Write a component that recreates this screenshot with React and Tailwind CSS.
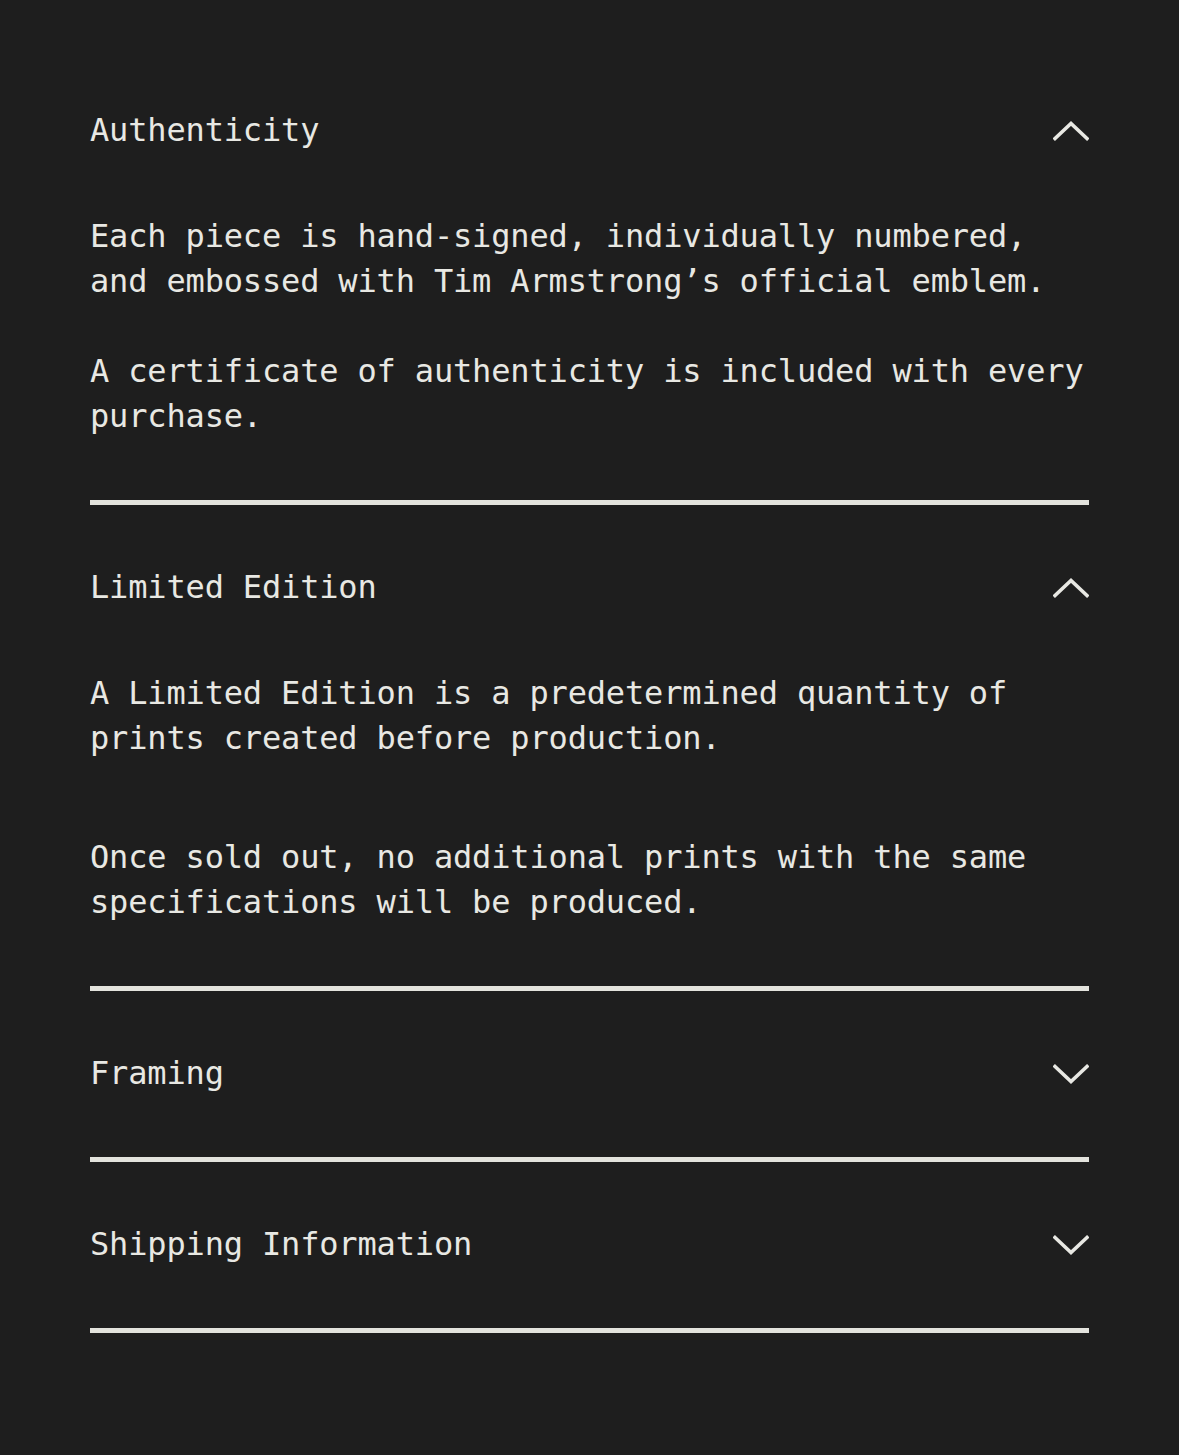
import React, { useState } from 'react'

const SECTIONS = [
  {
    id: 'auth',
    title: 'Authenticity',
    open: true,
    gap: 'mt-[45px]',
    paras: [
      'Each piece is hand-signed, individually numbered, and embossed with Tim Armstrong\u2019s official emblem.',
      'A certificate of authenticity is included with every purchase.',
    ],
  },
  {
    id: 'limited',
    title: 'Limited Edition',
    open: true,
    gap: 'mt-[74px]',
    paras: [
      'A Limited Edition is a predetermined quantity of prints created before production.',
      'Once sold out, no additional prints with the same specifications will be produced.',
    ],
  },
  { id: 'framing', title: 'Framing', open: false, paras: [] },
  { id: 'shipping', title: 'Shipping Information', open: false, paras: [] },
]

function Chevron({up}){
  return (
    <svg width="36" height="20" viewBox="0 0 36 20" fill="none" className="shrink-0">
      <path d={up ? 'M2 17.5 L18 2.5 L34 17.5' : 'M2 2.5 L18 17.5 L34 2.5'} stroke="#e8e8e3" strokeWidth="3.6" strokeLinecap="square" />
    </svg>
  )
}

export default function App(){
  const [open, setOpen] = useState(()=> Object.fromEntries(SECTIONS.map(s=>[s.id, s.open])))

  return (
    <main className="min-h-screen bg-[#1e1e1e] px-[90px] pt-[48px] pb-[120px] text-[#e8e8e3] text-[32px] leading-[45px] tracking-[-0.16px]" style={{fontFamily: '"DejaVu Sans Mono", "Liberation Mono", monospace'}}>
      {SECTIONS.map(s=> (
        <section key={s.id} className="border-b-[5px] border-[#e3e3dd]">
          <button
            onClick={()=> setOpen(o=>({...o, [s.id]: !o[s.id]}))}
            className="w-full flex items-center justify-between pt-[60px] pb-[61px] text-left"
          >
            <span>{s.title}</span>
            <Chevron up={open[s.id]} />
          </button>
          {open[s.id] && s.paras.length > 0 && (
            <div className="pb-[61px] pr-[2px]">
              {s.paras.map((p,i)=> <p key={i} className={i ? s.gap : ''}>{p}</p>)}
            </div>
          )}
        </section>
      ))}
    </main>
  )
}
